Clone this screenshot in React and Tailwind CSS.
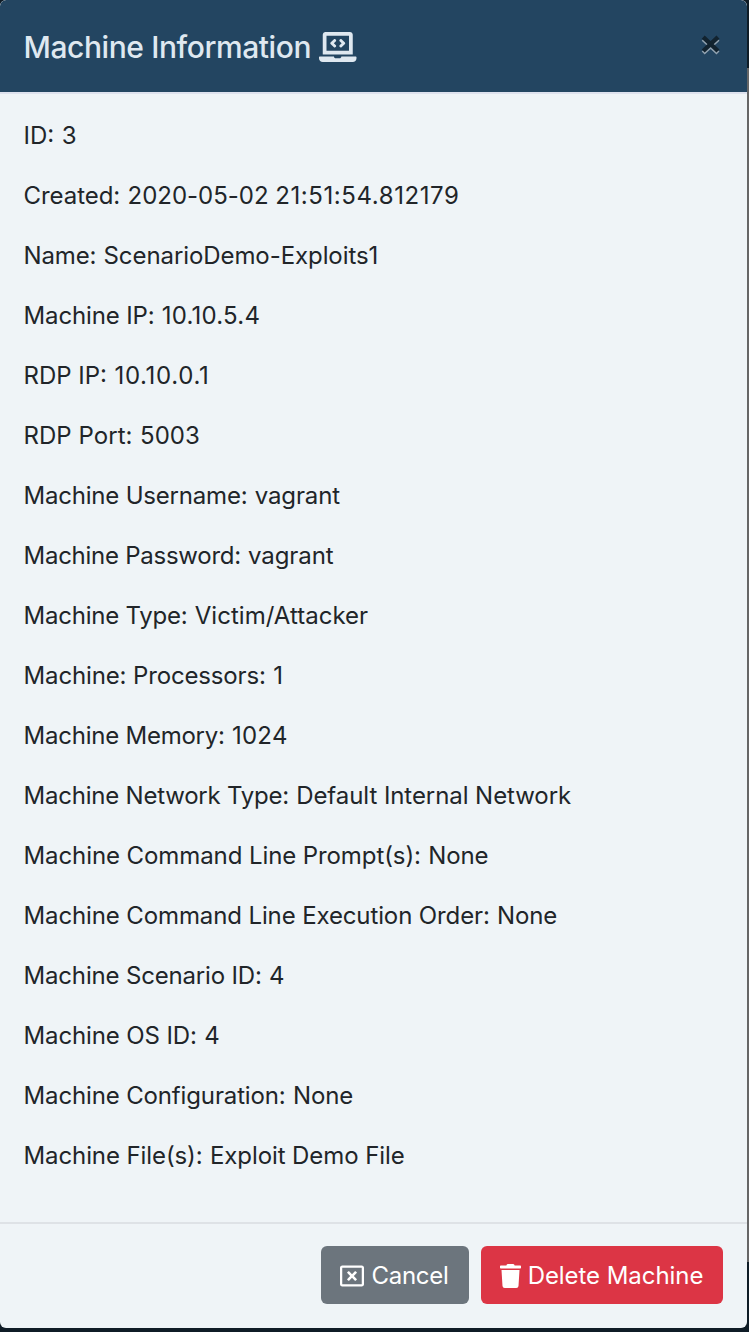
import { FaLaptopCode, FaRegWindowClose, FaTrash } from 'react-icons/fa';

const rows = [
  ['ID:', '3', '', ''],
  ['Created:', '2020-05-02 21:51:54.812179', 'tracking-[-0.05px]', ''],
  ['Name:', 'ScenarioDemo-Exploits1', 'tracking-[-0.15px]', 'tracking-[-0.08px]'],
  ['Machine IP:', '10.10.5.4', 'tracking-[-0.14px]', 'tracking-[0.22px]'],
  ['RDP IP:', '10.10.0.1', '', 'tracking-[0.67px]'],
  ['RDP Port:', '5003', 'tracking-[0.05px]', ''],
  ['Machine Username:', 'vagrant', 'tracking-[-0.2px]', 'tracking-[-0.1px]'],
  ['Machine Password:', 'vagrant', 'tracking-[-0.26px]', 'tracking-[-0.1px]'],
  ['Machine Type:', 'Victim/Attacker', 'tracking-[-0.22px]', 'tracking-[0.03px]'],
  ['Machine: Processors:', '1', 'tracking-[-0.14px]', ''],
  ['Machine Memory:', '1024', 'tracking-[-0.23px]', 'tracking-[0.25px]'],
  ['Machine Network Type:', 'Default Internal Network', 'tracking-[-0.22px]', 'tracking-[-0.07px]'],
  ['Machine Command Line Prompt(s):', 'None', 'tracking-[-0.09px]', 'tracking-[-0.1px]'],
  ['Machine Command Line Execution Order:', 'None', 'tracking-[-0.12px]', 'tracking-[-0.15px]'],
  ['Machine Scenario ID:', '4', 'tracking-[-0.17px]', ''],
  ['Machine OS ID:', '4', 'tracking-[-0.12px]', ''],
  ['Machine Configuration:', 'None', 'tracking-[-0.14px]', 'tracking-[-0.1px]'],
  ['Machine File(s):', 'Exploit Demo File', 'tracking-[-0.1px]', 'tracking-[-0.08px]'],
];

function Value({ text, track }) {
  const [date, time] = text.split(' ');
  if (/^\d{4}-/.test(date)) {
    return (
      <>
        <span className="tracking-[-0.02px]">{date} </span>
        <span className="tracking-[0.58px]">{time}</span>
      </>
    );
  }
  return <span className={track}>{text}</span>;
}

export default function App() {
  return (
    <div className="flex h-[1332px] w-[749px] bg-[#0f1c26] font-['Inter',sans-serif]">
      <div className="flex h-[1328px] w-[747px] flex-col overflow-hidden rounded-md bg-[#eff4f7] text-[#212529]">
        <header className="flex h-[94px] shrink-0 items-center justify-between rounded-t-md border-b-2 border-[#dee2ee] bg-[#234561] pt-0.5 pl-[23.5px] pr-[25px] text-[#dfe8f0]">
          <h1 className="flex items-center gap-2 text-[30px] font-medium tracking-[-0.42px]">
            Machine Information
            <FaLaptopCode className="h-[30px] w-[37.5px]" />
          </h1>
          <button aria-label="Close" className="-mt-1">
            <svg width="22" height="24" viewBox="0 0 22 24" fill="none" strokeWidth="4.4">
              <path d="M3.2 6.2 18 20M18 6.2 3.2 20" stroke="#91a2b0" />
              <path d="M3.2 4.2 18 18M18 4.2 3.2 18" stroke="#12232f" />
            </svg>
          </button>
        </header>
        <main className="flex-1 pt-6 pl-[23.5px]">
          {rows.map(([label, value, labelTrack, valueTrack]) => (
            <p key={label} className="mb-6 text-2xl leading-9">
              <span className={labelTrack}>{label} </span>
              <span className="ml-[0.7px]">
                <Value text={value} track={valueTrack} />
              </span>
            </p>
          ))}
        </main>
        <footer className="flex h-[106px] shrink-0 items-start justify-end gap-3 border-t-2 border-[#dee2e6] px-6 pt-[22px] text-2xl text-white">
          <button className="flex h-[58px] w-[148px] items-center justify-center gap-[7px] rounded-md bg-[#6c757d] pt-px pr-px tracking-[-0.25px]">
            <FaRegWindowClose className="size-6" />
            Cancel
          </button>
          <button className="flex h-[58px] w-[242px] items-center justify-center gap-[7px] rounded-md bg-[#dc3545] pt-px pr-px tracking-[-0.06px]">
            <FaTrash className="h-6 w-[21px]" />
            Delete Machine
          </button>
        </footer>
      </div>
      <div className="mt-[68px] h-[1194px] w-0.5 bg-[#666666]" />
    </div>
  );
}
